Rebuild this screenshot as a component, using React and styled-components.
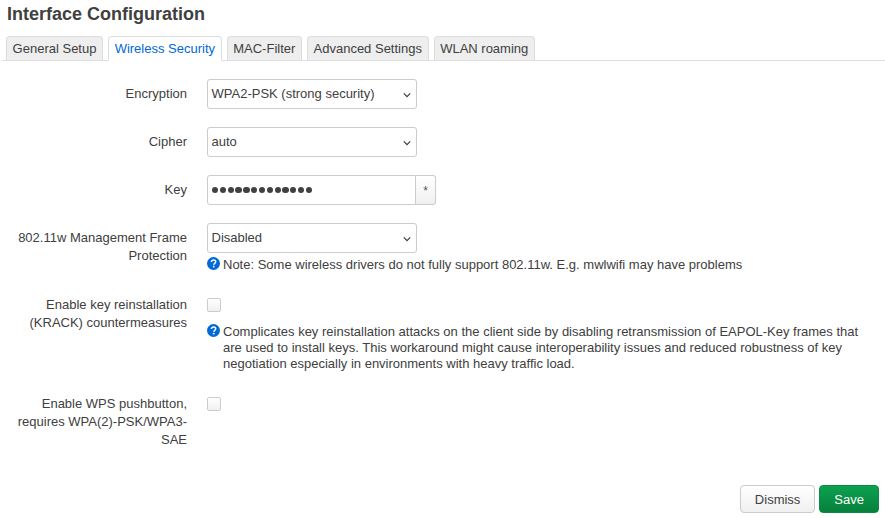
import styled, { createGlobalStyle } from 'styled-components'

const GlobalStyle = createGlobalStyle`
    html, body {
        margin: 0;
        padding: 0;
        background: #fff;
        font-family: "Liberation Sans", Arial, sans-serif;
        font-size: 13px;
        color: #404040;
    }
`
const Page = styled.div`
    width: 885px;
    height: 518px;
    overflow: hidden;
    box-sizing: border-box;
    display: flex;
    flex-direction: column;
`
const Title = styled.h2`
    margin: 4px 0 0 7px;
    font-size: 18px;
    line-height: 21px;
    font-weight: bold;
    color: #404040;
`
const Tabs = styled.ul`
    list-style: none;
    margin: 11px 0 0 2px;
    padding: 0 0 0 4px;
    display: flex;
    gap: 5px;
    border-bottom: 1px solid #ddd;
    height: 24px;
`
const Tab = styled.li`
    box-sizing: border-box;
    height: ${p => (p.$active ? '25px' : '24px')};
    padding: 0 5.6px;
    line-height: 23px;
    font-size: 13px;
    border: 1px solid #ddd;
    border-bottom: ${p => (p.$active ? '1px solid #fff' : '0')};
    border-radius: 4px 4px 0 0;
    background: ${p => (p.$active ? '#fff' : '#eee')};
    color: ${p => (p.$active ? '#0069d6' : '#404040')};
`
const Form = styled.div`
    padding-top: 18px;
    flex: 1;
`
const Row = styled.div`
    display: flex;
    gap: 20px;
    margin-bottom: ${p => p.$gap || 18}px;
`
const Label = styled.label`
    width: 187px;
    flex: none;
    box-sizing: border-box;
    padding: ${p => p.$top ?? 6}px 0 0 10px;
    text-align: right;
    line-height: 18px;
    color: #404040;
`
const Field = styled.div`
    display: flex;
    flex-direction: column;
    align-items: flex-start;
    min-width: 0;
`
const SelectBox = styled.div`
    box-sizing: border-box;
    width: 210px;
    height: 30px;
    border: 1px solid #ccc;
    border-radius: 3px;
    padding: 0 5px 1px 3.5px;
    display: flex;
    align-items: center;
    justify-content: space-between;
    background: #fff;
`
const Chevron = styled.svg`
    width: 8px;
    height: 8px;
    margin-top: 2px;
    fill: none;
    stroke: #404040;
    stroke-width: 1.3;
`
const KeyGroup = styled.div`
    display: flex;
    height: 30px;
`
const KeyInput = styled.div`
    box-sizing: border-box;
    width: 209px;
    border: 1px solid #ccc;
    border-radius: 3px 0 0 3px;
    padding-left: 4px;
    display: flex;
    align-items: center;
    gap: 1.65px;
`
const Dot = styled.span`
    width: 6.2px;
    height: 6.2px;
    border-radius: 50%;
    background: #404040;
`
const Reveal = styled.div`
    box-sizing: border-box;
    width: 20px;
    border: 1px solid #ccc;
    border-left: 0;
    border-radius: 0 3px 3px 0;
    background: linear-gradient(#fff, #f0f0f0);
    text-align: center;
    line-height: 31px;
    font-size: 12px;
    color: #555;
`
const Check = styled.div`
    box-sizing: border-box;
    width: 14px;
    height: 14px;
    margin-top: 3px;
    border: 1px solid #ccc;
    border-radius: 2px;
    background: linear-gradient(#fff, #f0f0f0);
`
const Help = styled.div`
    display: flex;
    gap: 3px;
    margin-top: ${p => p.$top || 3}px;
    line-height: 16px;
    font-size: 13px;
    color: #404040;
    width: 660px;
`
const HelpText = styled.span`
    margin-top: 1px;
`
const HelpIcon = styled.svg`
    width: 13px;
    height: 13px;
    flex: none;
    margin-top: 1px;
`
const Actions = styled.div`
    display: flex;
    justify-content: flex-end;
    gap: 4px;
    padding: 0 6px 5px 0;
`
const Button = styled.button`
    box-sizing: border-box;
    height: 28px;
    padding: 0 14px;
    border-radius: 4px;
    font: 13px "Liberation Sans", Arial, sans-serif;
    border: 1px solid ${p => (p.$primary ? '#0a8a44' : '#ccc')};
    background: ${p => (p.$primary ? 'linear-gradient(#0ca14f, #07803c)' : 'linear-gradient(#fff, #f0f0f0)')};
    color: ${p => (p.$primary ? '#fff' : '#404040')};
`

const Select = ({ value }) => (
    <SelectBox>
        {value}
        <Chevron viewBox="0 0 8 8"><path d="M.8 2.4 4 5.6l3.2-3.2" /></Chevron>
    </SelectBox>
)

const Info = () => (
    <HelpIcon viewBox="0 0 13 13">
        <circle cx="6.5" cy="6.5" r="6.5" fill="#0069d6" />
        <path d="M4.4 5c0-1.3 1-2 2.2-2s2.1.7 2.1 1.8c0 1.5-1.9 1.5-1.9 2.9" fill="none" stroke="#fff" strokeWidth="1.5" />
        <rect x="5.9" y="8.8" width="1.6" height="1.6" fill="#fff" />
    </HelpIcon>
)

const App = () => {
    const tabs = ['General Setup', 'Wireless Security', 'MAC-Filter', 'Advanced Settings', 'WLAN roaming']

    return (
        <Page>
            <GlobalStyle />
            <Title>Interface Configuration</Title>
            <Tabs>
                {tabs.map((tab) => (
                    <Tab key={tab} $active={tab === 'Wireless Security'}>{tab}</Tab>
                ))}
            </Tabs>
            <Form>
                <Row>
                    <Label>Encryption</Label>
                    <Field><Select value="WPA2-PSK (strong security)" /></Field>
                </Row>
                <Row>
                    <Label>Cipher</Label>
                    <Field><Select value="auto" /></Field>
                </Row>
                <Row>
                    <Label>Key</Label>
                    <Field>
                        <KeyGroup>
                            <KeyInput>
                                {Array.from({ length: 13 }, (_, i) => <Dot key={i} />)}
                            </KeyInput>
                            <Reveal>*</Reveal>
                        </KeyGroup>
                    </Field>
                </Row>
                <Row $gap={22}>
                    <Label>802.11w Management Frame Protection</Label>
                    <Field>
                        <Select value="Disabled" />
                        <Help><Info /><HelpText>Note: Some wireless drivers do not fully support 802.11w. E.g. mwlwifi may have problems</HelpText></Help>
                    </Field>
                </Row>
                <Row $gap={22}>
                    <Label $top={1}>Enable key reinstallation (KRACK) countermeasures</Label>
                    <Field>
                        <Check />
                        <Help $top={11}><Info /><HelpText>Complicates key reinstallation attacks on the client side by disabling retransmission of EAPOL-Key frames that are used to install keys. This workaround might cause interoperability issues and reduced robustness of key negotiation especially in environments with heavy traffic load.</HelpText></Help>
                    </Field>
                </Row>
                <Row>
                    <Label $top={1}>Enable WPS pushbutton, requires WPA(2)-PSK/WPA3-SAE</Label>
                    <Field><Check /></Field>
                </Row>
            </Form>
            <Actions>
                <Button>Dismiss</Button>
                <Button $primary>Save</Button>
            </Actions>
        </Page>
    )
}

export default App
